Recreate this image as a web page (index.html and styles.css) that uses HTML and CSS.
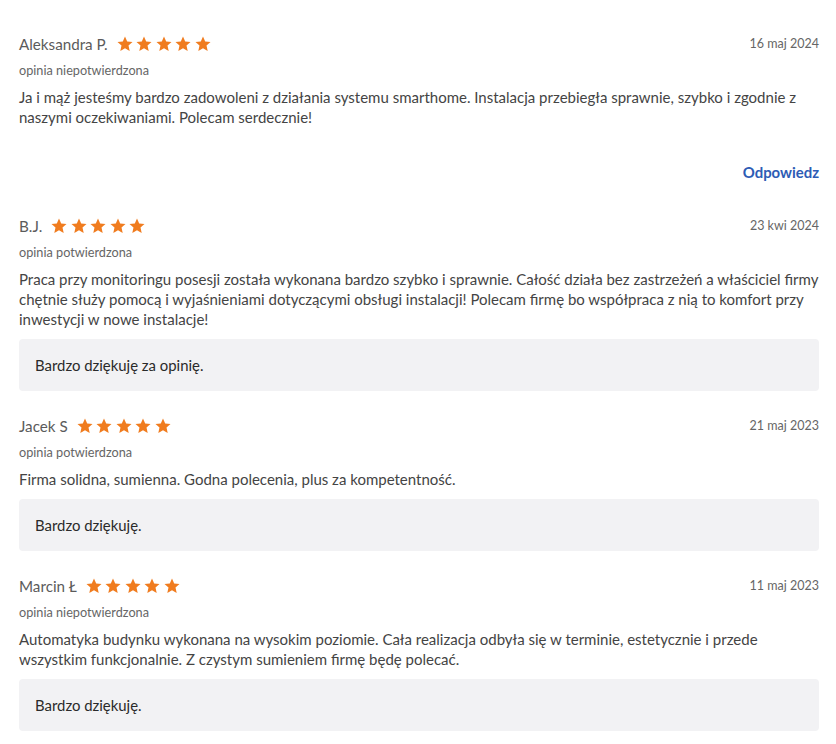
FILE: index.html
```html
<!DOCTYPE html>
<html lang="pl">
<head>
<meta charset="utf-8">
<title>Opinie</title>
<link rel="stylesheet" href="styles.css">
</head>
<body>
<svg width="0" height="0" class="defs" aria-hidden="true">
  <defs>
    <path id="star" d="M8 0.6l2.2 4.9 5.3 0.5-4 3.6 1.2 5.3L8 12.2l-4.7 2.7 1.2-5.3-4-3.6 5.3-0.5z"/>
  </defs>
</svg>
<main class="reviews">

  <article class="review">
    <header class="review-head">
      <span class="author">Aleksandra P.</span>
      <span class="stars"><svg viewBox="0 0 16 16"><use href="#star"/></svg><svg viewBox="0 0 16 16"><use href="#star"/></svg><svg viewBox="0 0 16 16"><use href="#star"/></svg><svg viewBox="0 0 16 16"><use href="#star"/></svg><svg viewBox="0 0 16 16"><use href="#star"/></svg></span>
      <time class="date">16 maj 2024</time>
    </header>
    <div class="status">opinia niepotwierdzona</div>
    <p class="text">Ja i mąż jesteśmy bardzo zadowoleni z działania systemu smarthome. Instalacja przebiegła sprawnie, szybko i zgodnie z naszymi oczekiwaniami. Polecam serdecznie!</p>
    <div class="actions"><a class="reply-link" href="#">Odpowiedz</a></div>
  </article>

  <article class="review">
    <header class="review-head">
      <span class="author">B.J.</span>
      <span class="stars"><svg viewBox="0 0 16 16"><use href="#star"/></svg><svg viewBox="0 0 16 16"><use href="#star"/></svg><svg viewBox="0 0 16 16"><use href="#star"/></svg><svg viewBox="0 0 16 16"><use href="#star"/></svg><svg viewBox="0 0 16 16"><use href="#star"/></svg></span>
      <time class="date">23 kwi 2024</time>
    </header>
    <div class="status">opinia potwierdzona</div>
    <p class="text">Praca przy monitoringu posesji została wykonana bardzo szybko i sprawnie. Całość działa bez zastrzeżeń a właściciel firmy chętnie służy pomocą i wyjaśnieniami dotyczącymi obsługi instalacji! Polecam firmę bo współpraca z nią to komfort przy inwestycji w nowe instalacje!</p>
    <div class="answer">Bardzo dziękuję za opinię.</div>
  </article>

  <article class="review">
    <header class="review-head">
      <span class="author">Jacek S</span>
      <span class="stars"><svg viewBox="0 0 16 16"><use href="#star"/></svg><svg viewBox="0 0 16 16"><use href="#star"/></svg><svg viewBox="0 0 16 16"><use href="#star"/></svg><svg viewBox="0 0 16 16"><use href="#star"/></svg><svg viewBox="0 0 16 16"><use href="#star"/></svg></span>
      <time class="date">21 maj 2023</time>
    </header>
    <div class="status">opinia potwierdzona</div>
    <p class="text">Firma solidna, sumienna. Godna polecenia, plus za kompetentność.</p>
    <div class="answer">Bardzo dziękuję.</div>
  </article>

  <article class="review">
    <header class="review-head">
      <span class="author">Marcin Ł</span>
      <span class="stars"><svg viewBox="0 0 16 16"><use href="#star"/></svg><svg viewBox="0 0 16 16"><use href="#star"/></svg><svg viewBox="0 0 16 16"><use href="#star"/></svg><svg viewBox="0 0 16 16"><use href="#star"/></svg><svg viewBox="0 0 16 16"><use href="#star"/></svg></span>
      <time class="date">11 maj 2023</time>
    </header>
    <div class="status">opinia niepotwierdzona</div>
    <p class="text">Automatyka budynku wykonana na wysokim poziomie. Cała realizacja odbyła się w terminie, estetycznie i przede wszystkim funkcjonalnie. Z czystym sumieniem firmę będę polecać.</p>
    <div class="answer">Bardzo dziękuję.</div>
  </article>

</main>
</body>
</html>
```

FILE: styles.css
```css
html, body {
  margin: 0;
  padding: 0;
  background: #ffffff;
}

body {
  font-family: "Lato", "Open Sans", sans-serif;
  color: #444;
  -webkit-font-smoothing: antialiased;
}

.defs {
  position: absolute;
  width: 0;
  height: 0;
  overflow: hidden;
}

.reviews {
  padding: 34px 17px 0 19px;
}

.review {
  margin-bottom: 25px;
}

.review-head {
  display: flex;
  align-items: center;
  height: 20px;
}

.author {
  font-size: 15.2px;
  color: #5b5b5b;
  line-height: 20px;
}

.stars {
  display: flex;
  gap: 3.5px;
  margin-left: 9px;
  fill: #f07c1f;
}

.stars svg {
  width: 16px;
  height: 16px;
  display: block;
}

.date {
  margin-left: auto;
  font-size: 12.5px;
  color: #666;
  line-height: 20px;
}

.status {
  margin-top: 6px;
  font-size: 12.7px;
  line-height: 20px;
  color: #666;
}

.text {
  margin: 7px 0 0;
  font-size: 15px;
  line-height: 20px;
  color: #444;
}

.actions {
  display: flex;
  justify-content: flex-end;
  margin-top: 35px;
  line-height: 20px;
  margin-bottom: 34px;
}

.reply-link {
  font-family: "Lato", sans-serif;
  font-weight: 700;
  font-size: 14.9px;
  color: #2d5cb5;
  text-decoration: none;
}

.answer {
  margin-top: 10px;
  padding: 16px 16px;
  line-height: 20px;
  background: #f2f2f4;
  border-radius: 4px;
  font-size: 14.9px;
  color: #2a2a2a;
}
```
